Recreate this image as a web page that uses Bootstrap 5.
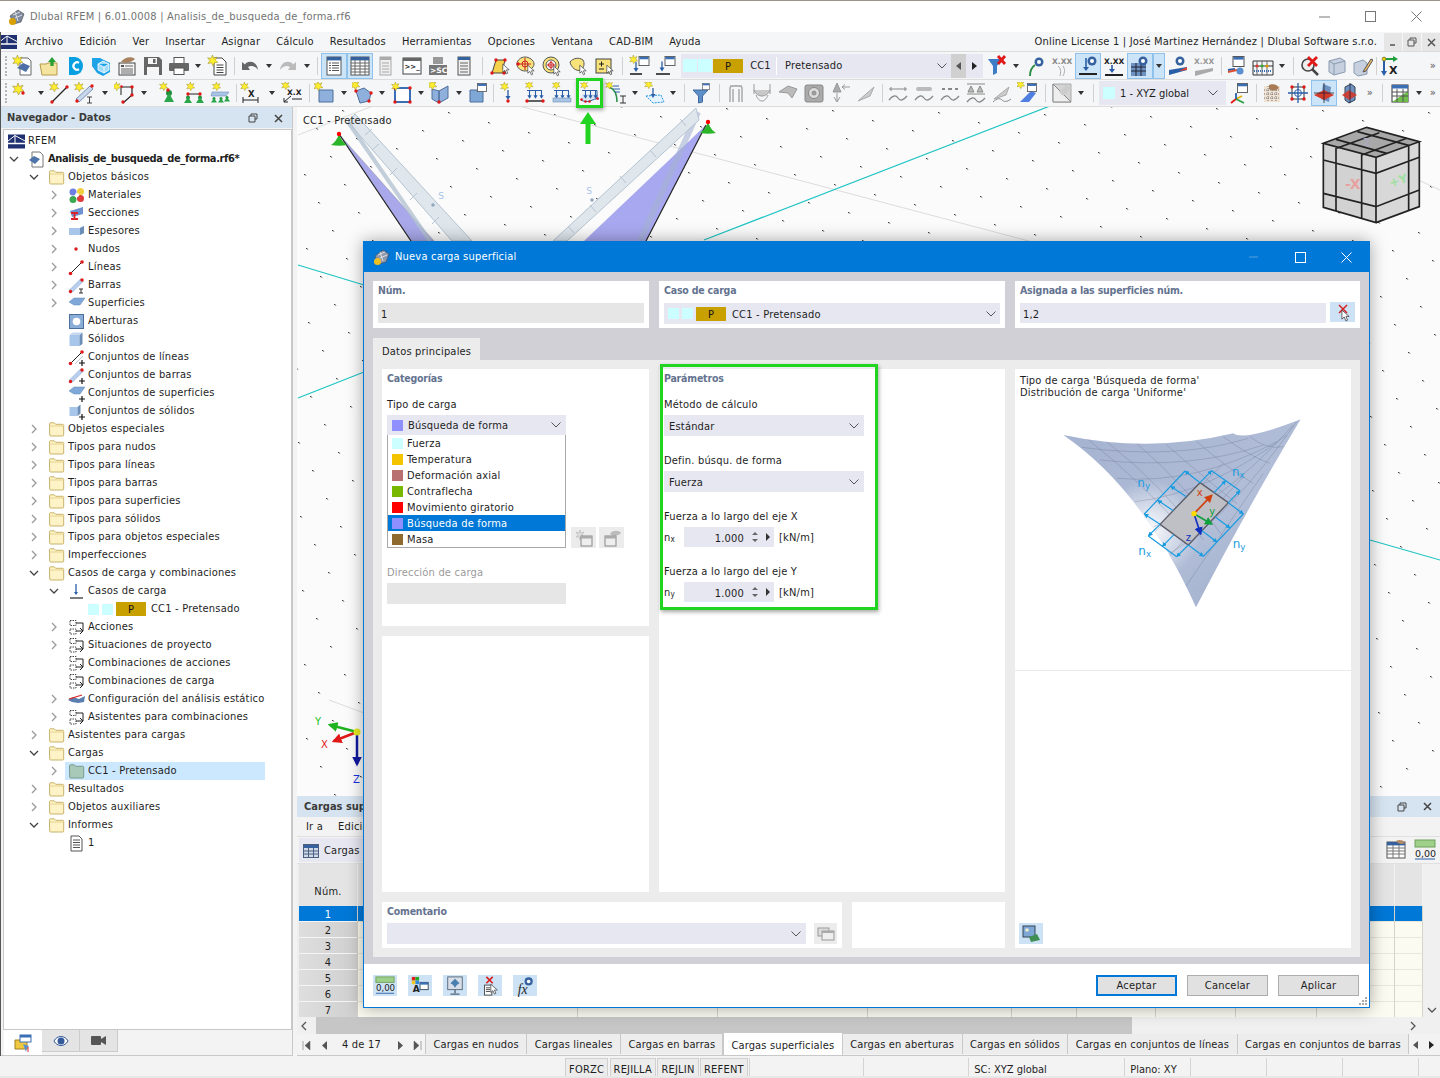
<!DOCTYPE html>
<html lang="es">
<head>
<meta charset="utf-8">
<title>Dlubal RFEM</title>
<link href="https://cdn.jsdelivr.net/npm/bootstrap@5.3.0/dist/css/bootstrap.min.css" rel="stylesheet">
<style>
html,body{margin:0;height:100%;overflow:hidden}
body{font-family:"DejaVu Sans Condensed","DejaVu Sans",sans-serif;font-size:11px;line-height:14px;color:#1e1e1e;background:#f0f0f0;letter-spacing:.2px}
svg{display:block;overflow:visible;letter-spacing:0}
.fx0{flex:none}
.app{position:relative;width:1440px;height:1078px;overflow:hidden;background:#f3f3f3}
.app::before{content:"";position:absolute;left:0;top:32px;bottom:22px;width:1px;background:#555;z-index:2}
.titlebar{height:32px;background:#fff;border-top:1px solid #9a9488;color:#737373;font-size:11px;padding-left:8px;flex:none}
.winbtn{width:46px;height:30px}
.menubar{height:20px;background:#f5f6f7;border-bottom:1px solid #dcdcdc;font-size:11px;flex:none;padding-top:1px}
.menu-items{gap:16px;padding-left:8px}
.lic{margin-left:auto;margin-right:6px}
.mdi{width:18px;height:18px;background:#e6e6e6;margin-left:1px}
.tbar{height:27px;background:#f5f6f7;border-bottom:1px solid #dcdcdc;padding-left:5px;flex:none}
.tbar1{height:28px}
.tb{width:26px;height:26px;flex:none;display:flex;align-items:center;justify-content:center}
.tb24{width:24px}
.tb svg{width:22px;height:22px}
.tb.on{background:#cce4f7;box-shadow:inset 0 0 0 1px #8fc1ea}
.ca{width:12px;height:26px;flex:none;display:flex;align-items:center;justify-content:center}
.ca::after{content:"";border:3px solid transparent;border-top:4px solid #333;border-bottom:0}
.ca15{width:15px}
.ca.on{background:#cce4f7;box-shadow:inset 0 0 0 1px #8fc1ea}
.g1{width:1px}.g2{width:2px}.g3{width:3px}.g4{width:4px}.g5{width:5px}.g6{width:6px}.g7{width:7px}.g8{width:8px}.g9{width:9px}.g10{width:10px}.g12{width:12px}
.gp{height:22px;flex:none;position:relative}
.gp.ln::after{content:"";position:absolute;left:50%;top:2px;bottom:2px;border-left:1px solid #d0d0d0}
.grip{width:3px;height:20px;flex:none;border-left:2px dotted #b4b4b4}
.more{width:14px;font-size:11px;color:#555;text-align:center;flex:none}
.combo{background:#e6e7f1;height:24px;flex:none;display:flex;align-items:center;font-size:11px}
.combo1{width:270px;padding-left:2px}
.combo2{width:127px;padding-left:4px;letter-spacing:0}
.xyz{margin-left:5px;padding-top:1px}
.sw{width:11px;height:11px;background:#ccffff;flex:none;display:block}
.sw14{width:14px;height:13px;background:#ccffff;flex:none;display:block;margin-right:1px}
.sw12{width:12px;height:12px;background:#ccffff;flex:none;display:block}
.s-bf{background:#8f8fff}.s-t{background:#f5c400}.s-d{background:#b87070}.s-c{background:#78b800}.s-m{background:#f00}.s-ma{background:#8f6a2f}
.gold{background:#c8a000;width:30px;height:14px;text-align:center;line-height:15px;flex:none;color:#111}
.cc1cell{width:34px;text-align:center;border-right:1px solid #fff;margin-right:8px;line-height:18px;padding-left:2px}
.chev{width:10px;height:6px;flex:none}
.arrowbtn{width:15px;height:24px;background:#d0d0d0;display:flex;align-items:center;justify-content:center;flex:none}
.arrowbtn2{width:17px;height:24px;background:#e6e7f1;display:flex;align-items:center;justify-content:center;flex:none}
.tri-l{border:4px solid transparent;border-right:5px solid #555;border-left:0}
.tri-r{border:4px solid transparent;border-left:5px solid #222;border-right:0}
.main{height:949px;flex:none}
.navpane{width:293px;flex:none;border-right:1px solid #c8c8c8;border-bottom:1px solid #c8c8c8}
.dockhead{background:#d6e4f1;height:21px;font-weight:700;font-size:11px;letter-spacing:0;color:#3b3b3b;padding:1px 5px 0 7px;flex:none}
.tree{flex:1;background:#fff;border:1px solid #c8c8c8;margin:1px 0 0 3px;overflow:hidden;padding-top:2px}
.trow{height:18px;display:flex;align-items:center;white-space:nowrap}
.trow b{letter-spacing:-.35px}
.lv0{padding-left:5px}.lv1{padding-left:25px}.lv2{padding-left:45px}.lv3{padding-left:84px;gap:3px}
.lv3 .lbl3{margin-left:2px}
.chv{width:10px;height:10px;flex:none;margin-right:9px}
.chv svg{width:10px;height:10px}
.nochv{width:10px;flex:none;margin-right:9px}
.ic{width:17px;height:17px;flex:none;margin-right:3px}
.ic svg{width:17px;height:17px}
.rowsel{background:#cce8ff;width:200px;padding-left:3px;height:18px;display:flex;align-items:center;margin-left:-3px}
.navtabs{height:25px;flex:none;background:#f3f3f3;padding-left:4px}
.navtab{width:38px;height:22px;background:#e4e4e4;border-right:1px solid #ccc;border-bottom:1px solid #ccc;flex:none}
.navtab.act{background:#fff;height:25px;border:0}
.rightpane{flex:1;min-width:0;margin-left:4px}
.viewport{height:689px;background:#fbfbfb;position:relative;overflow:hidden;flex:none}
.vplabel{position:absolute;left:6px;top:6px;font-size:11px;line-height:16px}
.canvas{position:absolute;left:0;top:0;width:1143px;height:689px}
.paneltop{height:21px;background:#d6e4f1;font-weight:700;font-size:11px;letter-spacing:0;color:#3b3b3b;padding-left:7px;flex:none}
.pmenu{height:20px;gap:15px;padding:1px 0 0 9px;flex:none;font-size:11px;border-bottom:1px solid #e0e0e0}
.ptool{height:27px;padding-left:2px;flex:none;border-bottom:1px solid #e0e0e0}
.ptoolsel{background:#e6e7f1;height:24px;padding:1px 30px 0 4px;gap:5px}
.ptright{gap:3px;padding-right:2px}
.grid{border-collapse:separate;border-spacing:0;table-layout:fixed;width:1124px;margin:0}
.grid col:nth-child(1){width:59px}.grid col:nth-child(2){width:220px}.grid col:nth-child(3){width:140px}.grid col:nth-child(4){width:150px}.grid col:nth-child(5){width:144px}.grid col:nth-child(6){width:65px}.grid col:nth-child(7){width:79px}.grid col:nth-child(8){width:80px}.grid col:nth-child(9){width:81px}.grid col:nth-child(10){width:78px}.grid col:nth-child(11){width:28px}
.grid th{height:42px;background:#e4e4e4;font-weight:400;text-align:center;border-right:1px solid #f2f2f2;padding:14px 0 0;vertical-align:middle;font-size:11px}
.grid td{height:16px;padding:0;background:#fbfbf1;border-right:1px solid #d4d4c8;box-shadow:inset 0 -1px #e8e8dc;overflow:hidden}
.grid td.rn{background:linear-gradient(90deg,#dedede,#cfcfcf);text-align:center;box-shadow:inset 0 -1px #f5f5f5;line-height:15px;padding-top:1px}
.grid tr.rsel td,.grid tr.rsel td.rn{background:#0078d7;color:#fff}
.gridwrap{height:153px;overflow:hidden;background:#eee;position:relative;flex:none;padding-left:2px}
.vs{position:absolute;right:0;top:0;bottom:0;width:17px;background:#f0f0f0}
.hs{height:17px;background:#f0f0f0;flex:none}
.hsthumb{width:816px;height:17px;background:#c6c6c6;margin-left:9px;flex:none}
.tabstrip{height:22px;flex:none;background:#f3f3f3;border-bottom:1px solid #c8c8c8}
.pager{width:128px;padding-left:5px;flex:none;white-space:nowrap;padding-top:1px}
.ml10{margin-left:10px}.ml11{margin-left:11px}.ml15{margin-left:15px}.ml17{margin-left:17px}.ml5{margin-left:5px}.ml3{margin-left:3px}.ml4{margin-left:4px}
.mtab{padding:0 7.5px;height:20px;line-height:21px;background:#ededed;border-left:1px solid #c8c8c8;flex:none;white-space:nowrap;letter-spacing:.15px}
.mtab.act{background:#fff;height:22px;margin-top:-1px;box-shadow:0 0 0 1px #c8c8c8;position:relative;line-height:26px;padding:0 7.5px}
.mtabend{border-right:1px solid #c8c8c8}
.tabarrows{gap:11px;padding-right:6px;margin-left:auto}
.statusbar{height:20px;background:#f3f3f3;border-bottom:2px solid #e8e8e8;margin-top:2px;flex:none}
.stgap{width:565px;flex:none}
.stcell{border-left:1px solid #d4d4d4;height:18px;line-height:23px;padding-left:5px;flex:none;letter-spacing:0}
.sb1{width:114px}.sb2{width:105px}.sb3{width:156px}.sb4{width:66px}.sb5{width:76px}
.stbtn{background:#ececec;border:1px solid #d0d0d0;border-bottom:0;height:18px;line-height:21px;padding:0 3px;flex:none;margin-right:1.500px}
.dlg{position:absolute;left:363px;top:241px;width:1007px;height:767px;background:#fff;border:1px solid #0078d7;box-shadow:0 0 16px rgba(0,0,0,.35);z-index:5}
.dlghead{height:30px;background:#0078d7;color:#fff;font-size:11px;padding-left:9px;flex:none}
.dlgtitle{margin-left:4px}
.dlgbody{background:#d0d0d6;height:692px;padding:9px 9px 7px;flex:none}
.topcards{gap:10px;height:47px}
.tc1{width:276px}.tc2{width:346px}.tc3{width:345px}
.boxw{background:#fff;border:0;border-radius:0}
.pad5{padding:3px 5px}
.hd{font-weight:700;font-size:10.5px;letter-spacing:-.2px;color:#64738f;line-height:14px;height:14px;margin:-1px 0 1px}
.hd2{font-weight:700;font-size:10.5px;letter-spacing:-.2px;color:#64738f;line-height:14px;padding-top:2px;box-sizing:content-box;height:14px}
.inp{background:#e6e6e6;height:20px;margin-top:5px;line-height:23px;padding-left:3px}
.inpb{background:#e6e7f1}
.sel{background:#e6e7f1;height:21px;padding:0 5px;position:relative;display:flex;align-items:center;justify-content:space-between}
.sel20{height:20px}
.selt{padding-top:2px}
.swgap{gap:3px}
.cclbl{margin-left:3px;padding-top:2px}
.bfl{margin-left:1px;padding-top:2px}
.dtabs{margin-top:10px;border:0}
.dtab{width:107px;height:22px;background:#ececec;line-height:27px;padding-left:9px}
.dpanel{background:#ececec;height:597px;padding:9px;gap:10px;margin-top:0}
.leftblk{width:623px;gap:10px}
.uprow{height:523px;gap:10px}
.col1{width:267px;gap:10px}
.cat{height:257px}
.emp{height:256px}
.col2{width:346px}
.ph{padding:0 5px}
.lowrow{height:47px;gap:10px}
.cm1{width:460px}.cm2{width:153px}
.rgt{width:336px;position:relative}
.rtext{padding:6px 5px 0;line-height:12px}
.illus{margin-top:6px}
.rline{border-top:1px solid #eaeaea;position:absolute;left:0;right:0;top:301px}
.lb{line-height:16px;height:14px}
.m12{margin-top:12px}.m17{margin-top:17px}.m4{margin-top:4px}
.w179{width:179px}.w200{width:200px}
.dd{width:179px;border:1px solid #a8a8a8;border-top:0;border-radius:0;margin-top:0;height:113px;background:#fff}
.dd .list-group-item{height:16px;border:0;padding:0 0 0 4px;display:flex;align-items:center;gap:4px;font-size:11px;background:transparent;color:#1e1e1e;line-height:17px;border-radius:0;margin-top:0}
.dd .list-group-item.active{background:#0078d7;color:#fff;margin-top:0}
.sbtn{width:25px;height:21px;background:#ececec;flex:none;display:flex;align-items:center;justify-content:center}
.sbtn svg{width:20px;height:18px}
.disabledlb{color:#9a9a9a}
.inpd{background:#e6e6e6;height:21px;width:179px;margin-top:4px}
.spin{width:90px;height:20px;background:#e6e7f1;flex:none;position:relative;display:flex;align-items:center;padding:3px 30px 0 0;justify-content:flex-end}
.spinctl{position:absolute;right:0;top:0;width:26px;height:20px}
.nlab{width:20px;flex:none;padding-top:2px}
.nlab sub{font-size:8px;bottom:-.1em;line-height:0}
.unit{margin-left:5px;padding-top:1px}
.dlgfoot{height:43px;flex:none;padding:0 10px 0 9px;position:relative;background:#fff}
.fbtn{width:24px;height:21px;background:#cde3f5;display:flex;align-items:center;justify-content:center;flex:none}
.fbtn svg{width:20px;height:20px}
.fbtn25{width:25px;height:20px;margin-top:1px}
.cmtbtn{width:23px;height:21px;background:#ececec;margin-top:4px;display:flex;align-items:center;justify-content:center;flex:none}
.cmtbtn svg{width:18px;height:14px}
.fbtns{gap:11px}
.btnrow{gap:10px}
.okb{width:81px;height:21px;padding:0;font-size:11px;letter-spacing:.2px;line-height:18px;background:#e1e1e1;border:1px solid #adadad;border-radius:0;color:#1e1e1e}
.okb:hover{background:#e1e1e1;color:#1e1e1e;border-color:#adadad}
.okb.prim{border:2px solid #0078d7}
.okb.prim:hover{border-color:#0078d7}
.rgrip{position:absolute;right:2px;bottom:2px;width:8px;height:8px}
.hilite{position:absolute;border:3px solid #22d422;box-shadow:1px 2px 4px rgba(0,0,0,.35);z-index:8;pointer-events:none}
.h1{left:576px;top:78px;width:27px;height:30px}
.h2{left:660px;top:364px;width:218px;height:246px}
.harrow{position:absolute;left:577px;top:110px;width:22px;height:38px;z-index:8}
</style>
</head>
<body>
<svg width="0" height="0" class="position-absolute">
<defs>
<marker id="ah" markerWidth="4" markerHeight="4" refX="3.500" refY="2" orient="auto"><path d="M0 0L4 2 0 4z" fill="#1a9ce0"/></marker>
<marker id="ahr" markerWidth="5" markerHeight="5" refX="4" refY="2.5" orient="auto"><path d="M0 0L5 2.5 0 5z" fill="#d0400f"/></marker>
<marker id="ahg" markerWidth="5" markerHeight="5" refX="4" refY="2.5" orient="auto"><path d="M0 0L5 2.5 0 5z" fill="#10a040"/></marker>
<marker id="ahb" markerWidth="5" markerHeight="5" refX="4" refY="2.5" orient="auto"><path d="M0 0L5 2.5 0 5z" fill="#1030c0"/></marker>
<marker id="ahrv" markerWidth="4" markerHeight="4" refX="3" refY="2" orient="auto"><path d="M0 0L4 2 0 4z" fill="#e01818"/></marker>
<marker id="ahgv" markerWidth="4" markerHeight="4" refX="3" refY="2" orient="auto"><path d="M0 0L4 2 0 4z" fill="#1fb41f"/></marker>
<marker id="ahbv" markerWidth="4" markerHeight="4" refX="3" refY="2" orient="auto"><path d="M0 0L4 2 0 4z" fill="#1018a0"/></marker>
<linearGradient id="surf" x1="0" y1="0" x2="1" y2="1"><stop offset="0" stop-color="#a4b2d0"/><stop offset=".6" stop-color="#b2bed8"/><stop offset="1" stop-color="#98a9c8"/></linearGradient>
<radialGradient id="shine" gradientUnits="userSpaceOnUse" cx="420" cy="480" r="150"><stop offset="0" stop-color="#fff" stop-opacity=".95"/><stop offset="1" stop-color="#fff" stop-opacity="0"/></radialGradient>
<clipPath id="surfclip"><path d="M160 195Q420 250 670 190Q700 215 872 148Q720 400 558 712Q400 360 160 195z"/></clipPath>
<pattern id="dots" width="40" height="40" patternUnits="userSpaceOnUse" patternTransform="matrix(1 .25 .35 .7 8 2)"><rect width="1.400" height="1.800" fill="#111"/></pattern>
</defs>

<symbol id="st" viewBox="0 0 22 22"><path d="M6 0l1.300 3.600L11 2.200 9.200 5.600 12 8.200l-3.800.3L6.600 12 5 8.600 1 9.400l2.200-3.200L.6 3 4.600 3.800z" fill="#ffee30" stroke="#8a7a10" stroke-width=".5"/></symbol>
<symbol id="rd" viewBox="0 0 4 4"><circle cx="2" cy="2" r="1.7" fill="#e01818"/></symbol>
<symbol id="w" viewBox="0 0 12 11"><rect x=".5" y=".5" width="11" height="10" fill="#fff" stroke="#555"/><rect x="1" y="1" width="10" height="2.6" fill="#3a6fb5"/></symbol>
<symbol id="cur" viewBox="0 0 10 14"><path d="M1 1v10l2.6-2.3L5.4 13l1.8-.8L5.500 8H9z" fill="#fff" stroke="#333" stroke-width=".8"/></symbol>
<symbol id="ar" viewBox="0 0 6 10"><path d="M3 0v7" stroke="#2a5fa8" stroke-width="1.300"/><path d="M.5 6L3 10l2.500-4z" fill="#2a5fa8"/></symbol>
<symbol id="sup" viewBox="0 0 8 8"><circle cx="4" cy="2.500" r="2" fill="#1f8f3c"/><path d="M4 2L8 8H0z" fill="#2aa64a"/></symbol>

<symbol id="a1" viewBox="0 0 22 22"><path d="M8 3h8l3 3v14H8z" fill="#fff" stroke="#666"/><path d="M5 13l6-5 7 3-4 6-4-2z" fill="#4d6fa5"/><use href="#st" width="20" height="20"/></symbol>
<symbol id="a2" viewBox="0 0 22 22"><path d="M2 9h6l2-1h9v12H4z" fill="#f5e4a0" stroke="#b79a4a"/><path d="M14 2l4 5h-2.400v4h-3.200V7H10z" fill="#27a035"/></symbol>
<symbol id="a3" viewBox="0 0 22 22"><path d="M5 2h6a8 9 0 010 18H5z" fill="#08a0e0"/><path d="M15 7.800a3.700 3.700 0 100 6.400" fill="none" stroke="#fff" stroke-width="2.200"/></symbol>
<symbol id="a4" viewBox="0 0 22 22"><path d="M2 3h8l10 5v9l-7 4-6-3-5-7z" fill="#1ea3e8"/><path d="M8 9l5-3 6 3v6l-5 3-6-3zM8 9l6 3 5-3M14 12v6" fill="#a0dcf8" stroke="#fff" stroke-width=".8"/></symbol>
<symbol id="a5" viewBox="0 0 22 22"><rect x="3" y="8" width="16" height="12" fill="#f5f5f5" stroke="#444"/><rect x="5" y="10" width="3" height="2" fill="#555"/><path d="M5 14h12M5 16h12M5 18h12M9 11h8" stroke="#666"/><path d="M5 7c3-5 11-6 14-3-3 3-9 5-14 3z" fill="#a9835f"/></symbol>
<symbol id="a6" viewBox="0 0 22 22"><path d="M2 2h15l3 3v15H2z" fill="#666"/><rect x="6" y="3" width="9" height="6" fill="#f5f5f5"/><rect x="5" y="12" width="12" height="8" fill="#f5f5f5"/><rect x="11" y="4" width="2.500" height="4" fill="#666"/></symbol>
<symbol id="a7" viewBox="0 0 22 22"><rect x="6" y="2.500" width="10" height="6" fill="#fff" stroke="#555"/><rect x="1" y="8" width="20" height="8" rx="1" fill="#666"/><rect x="6" y="13" width="10" height="6.500" fill="#fff" stroke="#555"/></symbol>
<symbol id="a8" viewBox="0 0 22 22"><path d="M7 3h8l4 4v13H7z" fill="#fff" stroke="#444"/><path d="M9.500 10h7M9.500 12.500h7M9.500 15h7M9.500 17.500h7" stroke="#444"/><use href="#st" width="20" height="20"/></symbol>
<symbol id="a9" viewBox="0 0 22 22"><path d="M7 8c6-3 11 0 12 7-3-4-7-5-10-3l2 3H3V7l3 2.600" fill="#666"/></symbol>
<symbol id="a10" viewBox="0 0 22 22"><path d="M15 8C9 5 4 8 3 15c3-4 7-5 10-3l-2 3h8V7l-3 2.600" fill="#bbb"/></symbol>
<symbol id="a11" viewBox="0 0 22 22"><rect x="4" y="2" width="14" height="18" fill="#fff" stroke="#555"/><rect x="4" y="2" width="14" height="3.400" fill="#35629f"/><path d="M6 8h2M6 10.500h2M6 13h2M6 15.500h2M9 8h7M9 10.500h7M9 13h7M9 15.500h7" stroke="#555"/></symbol>
<symbol id="a12" viewBox="0 0 22 22"><rect x="2" y="2" width="18" height="18" fill="#fff" stroke="#555"/><rect x="2" y="2" width="18" height="3.400" fill="#35629f"/><path d="M2 8h18M2 11h18M2 14h18M2 17h18M6 5v15M11 5v15M16 5v15" stroke="#666"/></symbol>
<symbol id="a13" viewBox="0 0 22 22"><rect x="5" y="2" width="11" height="18" fill="#eee" stroke="#aaa"/><rect x="5" y="2" width="11" height="3" fill="#aaa"/><path d="M7 8h7M7 11h7M7 14h7M7 17h7" stroke="#aaa"/></symbol>
<symbol id="a14" viewBox="0 0 22 22"><rect x="2" y="3" width="18" height="16" fill="#fff" stroke="#444"/><rect x="2" y="3" width="18" height="3" fill="#666"/><text x="3.500" y="14" font-size="7" font-weight="700" fill="#222" font-family="DejaVu Sans">&gt;&gt;_</text></symbol>
<symbol id="a15" viewBox="0 0 22 22"><path d="M6 2h10v7H6z" fill="#999"/><rect x="2" y="10" width="18" height="10" fill="#777"/><text x="3" y="18" font-size="7.500" font-weight="700" fill="#fff" font-family="DejaVu Sans">&gt;SC</text></symbol>
<symbol id="a16" viewBox="0 0 22 22"><rect x="5" y="2" width="12" height="18" fill="#eee" stroke="#555"/><rect x="5" y="2" width="12" height="3" fill="#35629f"/><path d="M7 8h8M7 11h8M7 14h8M7 17h8" stroke="#666"/></symbol>
<symbol id="b1" viewBox="0 0 22 22"><path d="M7 5h9l-2 8 3 5H3z" fill="#f6d24a" stroke="#444"/><use href="#rd" x="5" y="3" width="4" height="4"/><use href="#rd" x="14" y="3" width="4" height="4"/><use href="#rd" x="1" y="16" width="4" height="4"/><use href="#rd" x="13" y="16" width="4" height="4"/><use href="#cur" x="13" y="8" width="8" height="12"/></symbol>
<symbol id="b2" viewBox="0 0 22 22"><path d="M2 9c0-4 4-7 8-7s9 3 9 7-5 7-9 7-8-3-8-7z" fill="#f8e37a" stroke="#555"/><circle cx="10" cy="9" r="3" fill="none" stroke="#c22"/><path d="M10 3v12M4 9h12" stroke="#c22"/><use href="#rd" x="1" y="7" width="4" height="4"/><use href="#cur" x="12" y="9" width="8" height="12"/></symbol>
<symbol id="b3" viewBox="0 0 22 22"><circle cx="10" cy="10" r="8" fill="#f8e37a" stroke="#555"/><circle cx="10" cy="10" r="5" fill="#fff" stroke="#555"/><circle cx="10" cy="10" r="2.500" fill="none" stroke="#c22"/><path d="M10 6v8M6 10h8" stroke="#c22"/><use href="#cur" x="12" y="10" width="8" height="12"/></symbol>
<symbol id="b4" viewBox="0 0 22 22"><path d="M3 7c3-4 9-5 13-2 2 3 1 8-2 10-5 2-10-3-11-8z" fill="#f8e37a" stroke="#555"/><use href="#cur" x="12" y="9" width="8" height="12"/></symbol>
<symbol id="b5" viewBox="0 0 22 22"><rect x="3" y="4" width="15" height="14" fill="#f8e27a" stroke="#444"/><path d="M6 9h5M8.500 6.500v5M6 14h5" stroke="#222"/><use href="#cur" x="13" y="9" width="8" height="12"/></symbol>
<symbol id="b6" viewBox="0 0 22 22"><use href="#w" x="9" y="1" width="12" height="10"/><use href="#ar" x="4" y="7" width="6" height="10"/><path d="M1 19h12" stroke="#222" stroke-width="1.600"/><use href="#st" width="16" height="16"/></symbol>
<symbol id="b7" viewBox="0 0 22 22"><use href="#w" x="9" y="1" width="12" height="10"/><use href="#ar" x="4" y="6" width="6" height="11"/><path d="M1 19h14" stroke="#222" stroke-width="1.600"/></symbol>

<symbol id="c1" viewBox="0 0 22 22"><use href="#st" x="3" y="1" width="22" height="22"/><use href="#rd" x="12" y="9" width="4" height="4"/></symbol>
<symbol id="c2" viewBox="0 0 22 22"><path d="M4 20L19 5" stroke="#222" stroke-width="1.300"/><use href="#rd" x="2" y="18" width="4" height="4"/><use href="#rd" x="17" y="3" width="4" height="4"/><use href="#st" x="1" width="18" height="18"/></symbol>
<symbol id="c3" viewBox="0 0 22 22"><path d="M3 17L17 4l3 3L6 20z" fill="#c7d8ee" stroke="#7d93b3"/><use href="#rd" x="2" y="17" width="4" height="4"/><use href="#rd" x="17" y="2" width="4" height="4"/><path d="M14 15h5M16.500 15v6M14 21h5" stroke="#444" fill="none"/><use href="#st" x="1" width="18" height="18"/></symbol>
<symbol id="c4" viewBox="0 0 22 22"><path d="M7 5h11v8L9 21" fill="none" stroke="#222" stroke-width="1.200"/><path d="M7 5v8" stroke="#222"/><use href="#rd" x="16" y="3" width="4" height="4"/><use href="#rd" x="16" y="11" width="4" height="4"/><use href="#rd" x="7" y="18" width="4" height="4"/><use href="#rd" x="6" y="3" width="3" height="3"/><use href="#st" x="-2" width="16" height="16"/></symbol>
<symbol id="c5" viewBox="0 0 22 22"><circle cx="12" cy="11" r="3" fill="#1f8f3c"/><path d="M12 11l5 9H7z" fill="#2aa64a"/><use href="#rd" x="9" y="6" width="4" height="4"/><use href="#st" x="2" width="16" height="16"/></symbol>
<symbol id="c6" viewBox="0 0 22 22"><path d="M5 12h12" stroke="#222"/><use href="#sup" x="1" y="13" width="8" height="8"/><use href="#sup" x="13" y="13" width="8" height="8"/><use href="#rd" x="3" y="10" width="4" height="4"/><use href="#rd" x="15" y="10" width="4" height="4"/><use href="#st" x="3" width="16" height="16"/></symbol>
<symbol id="c7" viewBox="0 0 22 22"><path d="M3 10h17l-3 4H2z" fill="#a9c4e4" stroke="#6f8fb8" stroke-width=".6"/><use href="#sup" x="2" y="14" width="6" height="7"/><use href="#sup" x="9" y="14" width="6" height="7"/><use href="#sup" x="15" y="13" width="6" height="7"/><use href="#st" x="3" width="16" height="16"/></symbol>
<symbol id="c8" viewBox="0 0 22 22"><text x="8" y="15" font-size="8.500" font-weight="700" fill="#222" font-family="DejaVu Sans">X</text><path d="M3 18h15M3 15v6M18 15v6" stroke="#222"/><use href="#st" width="16" height="16"/></symbol>
<symbol id="c9" viewBox="0 0 22 22"><text x="6" y="13" font-size="7.500" font-weight="700" fill="#222" font-family="DejaVu Sans">X.X</text><path d="M3 20l7-6M3 20v-4M3 20h4M11 17h10" stroke="#222"/><use href="#st" x="0" y="-1" width="16" height="16"/></symbol>
<symbol id="c10" viewBox="0 0 22 22"><path d="M5 8h14v12H5z" fill="#8fb0dc" stroke="#4d6f9c"/><use href="#st" x="-1" y="-1" width="18" height="18"/></symbol>
<symbol id="c11" viewBox="0 0 22 22"><path d="M4 9l8-3 7 5-2 8-9 2z" fill="#8fb0dc" stroke="#4d6f9c"/><use href="#rd" x="2" y="7" width="4" height="4"/><use href="#rd" x="15" y="17" width="4" height="4"/><use href="#rd" x="17" y="9" width="4" height="4"/><use href="#st" x="-2" y="-2" width="18" height="18"/></symbol>
<symbol id="c12" viewBox="0 0 22 22"><rect x="4" y="6" width="15" height="14" fill="#fff" stroke="#3a6fb5" stroke-width="2"/><use href="#rd" x="2" y="4" width="4" height="4"/><use href="#rd" x="17" y="4" width="4" height="4"/><use href="#rd" x="2" y="18" width="4" height="4"/><use href="#rd" x="17" y="18" width="4" height="4"/><use href="#st" width="16" height="16"/></symbol>
<symbol id="c13" viewBox="0 0 22 22"><path d="M10 9l9-5v12l-9 5zM10 9L3 7v10l7 4z" fill="#8fb0dc" stroke="#4d6f9c"/><use href="#rd" x="8" y="18" width="4" height="4"/><use href="#st" x="-2" y="-2" width="18" height="18"/></symbol>
<symbol id="c14" viewBox="0 0 22 22"><path d="M3 8h13v12H3z" fill="#7fa7d6" stroke="#4d6f9c"/><use href="#w" x="9" y="1" width="12" height="9"/></symbol>
<symbol id="c15" viewBox="0 0 22 22"><use href="#ar" x="8" y="8" width="6" height="10"/><use href="#rd" x="9" y="17" width="4" height="4"/><use href="#st" x="3" y="0" width="16" height="16"/></symbol>
<symbol id="c16" viewBox="0 0 22 22"><use href="#ar" x="3" y="8" width="5" height="9"/><use href="#ar" x="9" y="8" width="5" height="9"/><use href="#ar" x="15" y="8" width="5" height="9"/><path d="M3 8.500h15" stroke="#2a5fa8"/><path d="M3 19h16" stroke="#222" stroke-width="1.400"/><use href="#rd" x="1" y="17" width="4" height="4"/><use href="#rd" x="17" y="17" width="4" height="4"/><use href="#st" x="1" y="-1" width="15" height="15"/></symbol>
<symbol id="c17" viewBox="0 0 22 22"><use href="#ar" x="3" y="8" width="5" height="9"/><use href="#ar" x="9" y="8" width="5" height="9"/><use href="#ar" x="15" y="8" width="5" height="9"/><path d="M3 8.500h15" stroke="#2a5fa8"/><rect x="2" y="16" width="18" height="4" fill="#a9c4e4" stroke="#6f8fb8" stroke-width=".6"/><use href="#st" x="1" y="-1" width="15" height="15"/></symbol>
<symbol id="c18" viewBox="0 0 22 22"><path d="M2 18c4 2 6 2 9 1s6-3 9-2l-1-5H3z" fill="#c9dcf2" opacity=".6"/><use href="#ar" x="4" y="8" width="5" height="9"/><use href="#ar" x="9" y="8" width="5" height="9"/><use href="#ar" x="14" y="8" width="5" height="9"/><path d="M3 8.500h15v8" stroke="#2a5fa8" fill="none"/><path d="M2 18c4 2 6 2 9 1s6-3 9-2" fill="none" stroke="#2a5fa8"/><use href="#rd" x="1" y="16" width="3" height="3"/><use href="#rd" x="9" y="18" width="3" height="3"/><use href="#rd" x="17" y="15" width="3" height="3"/><use href="#rd" x="5" y="18" width="3" height="3"/><use href="#st" x="1" y="-1" width="15" height="15"/></symbol>
<symbol id="c19" viewBox="0 0 22 22"><path d="M4 5c6 2 8 8 8 15" fill="none" stroke="#2a8f45" stroke-width="1.600"/><path d="M8 4h6M8 7h7M10 10h5" stroke="#2a5fa8"/><path d="M15 14h6M18 14v7M15 21h6" stroke="#333" fill="none"/><use href="#st" x="0" y="-1" width="15" height="15"/></symbol>
<symbol id="c20" viewBox="0 0 22 22"><path d="M3 14l15-1 3 7-11 1z" fill="#e6f4ff" stroke="#2a9ae0" stroke-dasharray="2 1"/><use href="#ar" x="7" y="6" width="6" height="10"/><use href="#st" x="1" y="-2" width="16" height="16"/></symbol>
<symbol id="c21" viewBox="0 0 22 22"><path d="M2 8h15l-5.500 6v6l-4 1v-7z" fill="#5f8fc8" stroke="#3f6a9f"/><use href="#w" x="9" y="1" width="12" height="7"/></symbol>

<symbol id="d1" viewBox="0 0 22 22"><path d="M5 20V6c0-3 12-3 12 0v14M8 20V7M14 20V7M5 4h12" fill="none" stroke="#aaa" stroke-width="1.500"/></symbol>
<symbol id="d2" viewBox="0 0 22 22"><path d="M3 2v10M19 2v10M3 8c3 8 13 8 16 0" fill="#c8c8c8" stroke="#999"/><path d="M5 13c3 8 9 8 12 0" fill="none" stroke="#999"/></symbol>
<symbol id="d3" viewBox="0 0 22 22"><path d="M2 10l9-6 9 3-5 9-4-5z" fill="#bbb" stroke="#999"/></symbol>
<symbol id="d4" viewBox="0 0 22 22"><rect x="2" y="3" width="18" height="17" rx="2" fill="#aaa" stroke="#888"/><circle cx="11" cy="11" r="5.500" fill="#ddd" stroke="#888"/><circle cx="11" cy="11" r="2.500" fill="#999"/></symbol>
<symbol id="d5" viewBox="0 0 22 22"><path d="M8 1l4 9H4zM8 11v9" fill="#aaa" stroke="#999"/><path d="M13 5h8M13 5l3-2.500M13 5l3 2.500M5 15l3 5 3-5" stroke="#999" fill="none"/></symbol>
<symbol id="d6" viewBox="0 0 22 22"><path d="M3 19L19 5l-4 9z" fill="#ccc" stroke="#aaa"/></symbol>
<symbol id="d7" viewBox="0 0 22 22"><path d="M2 7h18M4 5v4M18 5v4" stroke="#888"/><path d="M2 18c4-5 7-5 9-2s5 3 9-2" fill="none" stroke="#888" stroke-width="1.300"/></symbol>
<symbol id="d8" viewBox="0 0 22 22"><rect x="3" y="5" width="16" height="4" rx="2" fill="#bbb"/><path d="M2 18c4-5 7-5 9-2s5 3 9-2" fill="none" stroke="#888" stroke-width="1.300"/></symbol>
<symbol id="d9" viewBox="0 0 22 22"><path d="M3 7h3M9 7h4M16 7h3" stroke="#888" stroke-width="2"/><path d="M2 18c4-5 7-5 9-2s5 3 9-2" fill="none" stroke="#888" stroke-width="1.300"/></symbol>
<symbol id="d10" viewBox="0 0 22 22"><path d="M2 2h18M6 4l3 6H3zM15 4l3 6h-6zM2 12h18" stroke="#888" fill="#bbb"/><path d="M2 20c4-5 7-5 9-2s5 3 9-2" fill="none" stroke="#888" stroke-width="1.300"/></symbol>
<symbol id="d11" viewBox="0 0 22 22"><path d="M3 17L18 5l-3 8z" fill="#ccc" stroke="#aaa"/><path d="M2 20c4-4 7-4 9-2s5 2 9-1" fill="none" stroke="#888"/></symbol>
<symbol id="d12" viewBox="0 0 22 22"><path d="M3 20L14 9l5 2-7 9z" fill="#4f7fe0"/><use href="#w" x="9" y="1" width="12" height="9"/><use href="#st" x="-1" y="-2" width="16" height="16"/></symbol>
<symbol id="d13" viewBox="0 0 22 22"><path d="M2 2h18v18H2z" fill="#d4d4d4" stroke="#aaa"/><path d="M2 2l18 18M2 2v18h18" stroke="#888" fill="#eee"/><path d="M16 2l4 4-8 8-4-4z" fill="#ccc"/></symbol>
<symbol id="e1" viewBox="0 0 22 22"><path d="M2 4h14l-5 7v7l-4 2v-9z" fill="#3d7dc8"/><path d="M12 1l7 8M19 1l-7 8" stroke="#e01818" stroke-width="2.800"/></symbol>
<symbol id="e2" viewBox="0 0 22 22"><circle cx="14" cy="7" r="4.500" fill="#35629f"/><circle cx="14" cy="7" r="2" fill="#fff"/><path d="M5 21c0-6 2-9 5-11" fill="none" stroke="#2a8f45" stroke-width="2"/></symbol>
<symbol id="e3" viewBox="0 0 22 22"><text x="1" y="9" font-size="7.500" font-weight="700" fill="#888" font-family="DejaVu Sans">X.XX</text><path d="M7 11c3 2 3 6 2 10M12 11c2 3 2 6 0 10" fill="none" stroke="#aaa"/></symbol>
<symbol id="e4" viewBox="0 0 22 22"><circle cx="15" cy="6" r="4.500" fill="#35629f"/><circle cx="15" cy="6" r="2" fill="#fff"/><path d="M9 3v12" stroke="#2a5fa8" stroke-width="1.600"/><path d="M6 12l3 4 3-4z" fill="#2a5fa8"/><path d="M2 19h18" stroke="#222" stroke-width="2"/></symbol>
<symbol id="e5" viewBox="0 0 22 22"><text x="1" y="9" font-size="7.500" font-weight="700" fill="#222" font-family="DejaVu Sans">X.XX</text><path d="M9 10v6" stroke="#2a5fa8" stroke-width="1.600"/><path d="M6 14l3 4 3-4z" fill="#2a5fa8"/><path d="M2 20h18" stroke="#222" stroke-width="2"/></symbol>
<symbol id="e6" viewBox="0 0 22 22"><rect x="2" y="8" width="15" height="13" fill="#6d92c2"/><path d="M2 12h15M2 16h15M7 8v13M12 8v13" stroke="#223"/><circle cx="14" cy="6" r="4.500" fill="#35629f"/><circle cx="14" cy="6" r="2" fill="#fff"/></symbol>
<symbol id="e7" viewBox="0 0 22 22"><circle cx="13" cy="6" r="4.500" fill="#35629f"/><circle cx="13" cy="6" r="2" fill="#fff"/><path d="M2 15l18-3v3L2 20z" fill="#2a5fa8"/><path d="M20 12v3l-8 1" fill="#d43"/></symbol>
<symbol id="e8" viewBox="0 0 22 22"><text x="1" y="9" font-size="7.500" font-weight="700" fill="#999" font-family="DejaVu Sans">X.XX</text><path d="M2 16l18-3v3L2 21z" fill="#aaa"/></symbol>
<symbol id="e9" viewBox="0 0 22 22"><use href="#w" x="6" y="1" width="13" height="11"/><path d="M2 15l7-1" stroke="#2a5fa8" stroke-width="2"/><path d="M2 17l9-2" stroke="#e05030" stroke-width="2"/><circle cx="14" cy="16" r="3.500" fill="#5a8fd0"/></symbol>
<symbol id="e10" viewBox="0 0 22 22"><path d="M1 6h20v14H1z" fill="none" stroke="#333"/><path d="M5 6v14M10 6v14M15 6v14" stroke="#666"/><path d="M1 11h20" stroke="#333"/><circle cx="5" cy="11" r="1.600" fill="#d33"/><circle cx="10" cy="11" r="1.600" fill="#3a3"/><circle cx="15" cy="11" r="1.600" fill="#d90"/><path d="M2 16h17" stroke="#3a6fb5" stroke-width="2" stroke-dasharray="1 1"/></symbol>
<symbol id="e11" viewBox="0 0 22 22"><circle cx="9" cy="10" r="6" fill="#eee" stroke="#444" stroke-width="1.600"/><path d="M13 14l6 6" stroke="#444" stroke-width="2.500"/><path d="M9 2l9 9M18 2l-9 9" stroke="#e01818" stroke-width="2.800"/></symbol>
<symbol id="e12" viewBox="0 0 22 22"><path d="M4 6l11-3 5 3v11l-11 3-5-3z" fill="#c6d0de" stroke="#8a9bb2"/><path d="M4 6l5 3 11-3M9 9v11" stroke="#8a9bb2" fill="none"/></symbol>
<symbol id="e13" viewBox="0 0 22 22"><path d="M3 8l9-3 4 3v11l-9 2-4-3z" fill="#c6d0de" stroke="#8a9bb2"/><path d="M13 15L20 4l2 1-7 11-3 1z" fill="#f2b86b" stroke="#555"/></symbol>
<symbol id="e14" viewBox="0 0 22 22"><path d="M5 2v17" stroke="#2a5fa8" stroke-width="2"/><path d="M2 16l3 5 3-5z" fill="#2a5fa8"/><path d="M5 4h11" stroke="#1f9f3c" stroke-width="2"/><path d="M14 1l5 3-5 3z" fill="#1f9f3c"/><circle cx="5" cy="4" r="2" fill="#e8d000" stroke="#444" stroke-width=".5"/><text x="10" y="19" font-size="11" font-weight="700" fill="#222" font-family="DejaVu Sans">X</text></symbol>
<symbol id="f1" viewBox="0 0 22 22"><rect x="3" y="4" width="16" height="16" fill="#e8c9a0" opacity=".4"/><path d="M3 8h16M3 12h16M3 16h16M7 4v16M11 4v16M15 4v16" stroke="#777" stroke-dasharray="1 1"/><path d="M8 3c4-2 9 0 10 3-3 3-7 3-10 1z" fill="#a87a55"/></symbol>
<symbol id="f2" viewBox="0 0 22 22"><rect x="5" y="5" width="12" height="12" fill="#fff" stroke="#333"/><path d="M11 1v20M1 11h20" stroke="#2a5fa8" stroke-width="1.300"/><circle cx="11" cy="11" r="3.500" fill="none" stroke="#2a5fa8"/><use href="#rd" x="3" y="3" width="4" height="4"/><use href="#rd" x="15" y="3" width="4" height="4"/><use href="#rd" x="3" y="15" width="4" height="4"/><use href="#rd" x="15" y="15" width="4" height="4"/></symbol>
<symbol id="f3" viewBox="0 0 22 22"><path d="M10 2l8 3-2 15-8-3z" fill="#6d92c2"/><path d="M1 13l10-5 10 5-10 5z" fill="#d23a2a"/><path d="M11 1v20M1 11h20" stroke="#223" stroke-width=".8"/></symbol>
<symbol id="f4" viewBox="0 0 22 22"><path d="M6 5l6-3 4 3v13l-6 3-4-3z" fill="#6d92c2" stroke="#345"/><path d="M10 8l8 5-8 5-7-5z" fill="#d23a2a" opacity=".9"/><path d="M11 1v20" stroke="#223" stroke-width=".8"/></symbol>
<symbol id="f5" viewBox="0 0 22 22"><rect x="3" y="3" width="16" height="17" fill="#fff" stroke="#333"/><rect x="3" y="3" width="16" height="3.500" fill="#3a6fb5"/><path d="M3 20h16V9z" fill="#6fbf4a"/><path d="M3 10h16M3 14h16M8 7v13M14 7v13" stroke="#555"/></symbol>
<symbol id="f6" viewBox="0 0 22 22"><use href="#w" x="7" y="1" width="13" height="10"/><path d="M7 17l6-3" stroke="#e0b000" stroke-width="1.800"/><path d="M7 17l-5 4" stroke="#e01818" stroke-width="1.800"/><path d="M7 17l8 4" stroke="#2a9f45" stroke-width="1.800"/><path d="M7 17v-6" stroke="#2a5fa8" stroke-width="1.800"/></symbol>

<symbol id="fold" viewBox="0 0 17 17"><path d="M1.500 5V2.800c0-.6.500-1 1-1h3.700l1.500 1.500h7c.6 0 1 .5 1 1V14c0 .6-.5 1-1 1h-12c-.6 0-1-.4-1-1z" fill="#fdf3c6" stroke="#c8b26a"/><path d="M1.500 5h14" stroke="#e4d28c"/></symbol>
<symbol id="foldg" viewBox="0 0 17 17"><path d="M1.500 5V2.800c0-.6.500-1 1-1h3.700l1.500 1.500h7c.6 0 1 .5 1 1V14c0 .6-.5 1-1 1h-12c-.6 0-1-.4-1-1z" fill="#a8c8b8" stroke="#789c8c"/></symbol>
<symbol id="rf" viewBox="0 0 17 14"><rect width="17" height="14" fill="#1f2f6f"/><path d="M0 9h17" stroke="#fff" stroke-width="1.500"/><path d="M0 6.500L7 1l10 5.500" fill="none" stroke="#fff"/><path d="M7 1v8" stroke="#fff"/></symbol>
<symbol id="tfile" viewBox="0 0 17 17"><path d="M4 1h8l3 3v12H4z" fill="#fff" stroke="#777"/><path d="M1 9l5-4 6 3-5 5z" fill="#4d74a8"/></symbol>
<symbol id="tmat" viewBox="0 0 17 17"><circle cx="5" cy="5" r="3.500" fill="#6d7fe0"/><circle cx="12.500" cy="4.500" r="3.500" fill="#f0d040"/><circle cx="5" cy="12.500" r="3.500" fill="#39a850"/><circle cx="12.500" cy="11.500" r="3.500" fill="#e03a3a"/><circle cx="9" cy="8" r="2" fill="#fff"/></symbol>
<symbol id="tsec" viewBox="0 0 17 17"><path d="M2 6l13-4v7L4 12z" fill="#6d92cf"/><path d="M3 8h7M6.500 8v6M3 14h7" stroke="#d8242a" stroke-width="1.800" fill="none"/></symbol>
<symbol id="tthk" viewBox="0 0 17 17"><path d="M1 5h11l4-2v7l-4 2H1z" fill="#a8c6ea"/><path d="M12 5l4-2v7l-4 2z" fill="#6b8eb8"/></symbol>
<symbol id="tnod" viewBox="0 0 17 17"><circle cx="8" cy="8" r="1.700" fill="#e01818"/></symbol>
<symbol id="tlin" viewBox="0 0 17 17"><path d="M2 15L14 3" stroke="#222"/><circle cx="2.500" cy="14.500" r="1.800" fill="#e01818"/><circle cx="14" cy="3" r="1.800" fill="#e01818"/></symbol>
<symbol id="tbar" viewBox="0 0 17 17"><path d="M1.500 13L12.500 2l3 2-11 11z" fill="#b8cff0" stroke="#7d9ac2" stroke-width=".5"/><circle cx="2.500" cy="14.500" r="1.700" fill="#e01818"/><circle cx="14" cy="3" r="1.700" fill="#e01818"/><path d="M11 12h4M13 12v4M11 16h4" stroke="#333"/></symbol>
<symbol id="tsur" viewBox="0 0 17 17"><path d="M1 7l5-4h11l-5 7H6z" fill="#7fa8d8" stroke="#5f88b8" stroke-width=".5"/></symbol>
<symbol id="tabe" viewBox="0 0 17 17"><rect x="1.500" y="1.500" width="14" height="14" fill="#8aaed8" stroke="#4d6f9c"/><circle cx="8.500" cy="8.500" r="3.800" fill="#fff"/></symbol>
<symbol id="tsol" viewBox="0 0 17 17"><path d="M1.500 4h10v11h-10z" fill="#a8c6ea"/><path d="M11.500 4l3-2.500V13l-3 2z" fill="#6b8eb8"/><path d="M1.500 4l3-2.500h10l-3 2.500z" fill="#c4d8f0"/></symbol>
<symbol id="plus" viewBox="0 0 6 6"><path d="M3 0v6M0 3h6" stroke="#111" stroke-width="1.200"/></symbol>
<symbol id="tlc" viewBox="0 0 17 17"><path d="M2 15L14 3" stroke="#222"/><path d="M7 15L15 7" stroke="#bcc9dc"/><circle cx="2.500" cy="14.500" r="1.800" fill="#e01818"/><circle cx="14" cy="3" r="1.800" fill="#e01818"/><use href="#plus" x="11" y="11" width="6" height="6"/></symbol>
<symbol id="tbc" viewBox="0 0 17 17"><path d="M1.500 13L12.500 2l3 2-11 11z" fill="#b8cff0" stroke="#7d9ac2" stroke-width=".5"/><circle cx="2.500" cy="14.500" r="1.700" fill="#e01818"/><circle cx="14" cy="3" r="1.700" fill="#e01818"/><use href="#plus" x="11" y="11" width="6" height="6"/></symbol>
<symbol id="tsc" viewBox="0 0 17 17"><path d="M1 6l5-4h11l-5 7H6z" fill="#7fa8d8" stroke="#5f88b8" stroke-width=".5"/><use href="#plus" x="11" y="11" width="6" height="6"/></symbol>
<symbol id="tsoc" viewBox="0 0 17 17"><path d="M1.500 4h8v9h-8z" fill="#a8c6ea"/><path d="M9.500 4l3-2.500v9l-3 2.500z" fill="#6b8eb8"/><use href="#plus" x="11" y="11" width="6" height="6"/></symbol>
<symbol id="tload" viewBox="0 0 17 17"><path d="M8 1v10" stroke="#2a5fa8" stroke-width="1.300"/><path d="M6 9l2 3 2-3z" fill="#2a5fa8"/><path d="M2 15h13" stroke="#444" stroke-width="1.400"/></symbol>
<symbol id="tact" viewBox="0 0 17 17"><rect x="2" y="1.500" width="6" height="5" fill="none" stroke="#444" stroke-dasharray="1.500 1"/><rect x="2" y="10" width="6" height="5" fill="none" stroke="#444" stroke-dasharray="1.500 1"/><path d="M8 4h7v8H8M12 9l3 3-3 3" fill="none" stroke="#222"/></symbol>
<symbol id="tcfg" viewBox="0 0 17 17"><path d="M0 9l5-3 6 2 6-3-1 6-6 1-6-1z" fill="#5a7eb0"/><path d="M1 8l13-4" stroke="#d22" stroke-width="1.300"/></symbol>
<symbol id="tdoc" viewBox="0 0 17 17"><path d="M3 1h8l3 3v12H3z" fill="#fff" stroke="#555"/><path d="M5 5h7M5 7.500h7M5 10h7M5 12.500h7" stroke="#555"/></symbol>
<symbol id="cr" viewBox="0 0 10 10"><path d="M3 1l4 4-4 4" fill="none" stroke="#999" stroke-width="1.300"/></symbol>
<symbol id="cd" viewBox="0 0 10 10"><path d="M1 3l4 4 4-4" fill="none" stroke="#444" stroke-width="1.300"/></symbol>
</svg>

<div class="app d-flex flex-column">
  <div class="titlebar d-flex align-items-center">
    <svg width="18" height="18" viewBox="0 0 18 18" class="me-1"><path d="M2 8l8-6 6 4-3 8-7 2z" fill="#7e8aa0" stroke="#444" stroke-width=".6"/><path d="M5 7l7-3M7 10l7-3M7 4l3 9" stroke="#ddd"/><circle cx="4.500" cy="13.500" r="3.500" fill="#d8a000"/></svg>
    <span>Dlubal RFEM | 6.01.0008 | Analisis_de_busqueda_de_forma.rf6</span>
    <div class="ms-auto d-flex">
      <div class="winbtn d-flex align-items-center justify-content-center"><svg width="12" height="12" viewBox="0 0 12 12"><path d="M0 6h11" stroke="#777"/></svg></div>
      <div class="winbtn d-flex align-items-center justify-content-center"><svg width="12" height="12" viewBox="0 0 12 12"><rect x=".5" y=".5" width="10" height="10" fill="none" stroke="#777"/></svg></div>
      <div class="winbtn d-flex align-items-center justify-content-center"><svg width="12" height="12" viewBox="0 0 12 12"><path d="M.5.5l10 10M10.500.5l-10 10" stroke="#777"/></svg></div>
    </div>
  </div>

  <div class="menubar d-flex align-items-center">
    <svg width="17" height="14" class="fx0"><use href="#rf"/></svg>
    <div class="d-flex menu-items"><span>Archivo</span><span>Edición</span><span>Ver</span><span>Insertar</span><span>Asignar</span><span>Cálculo</span><span>Resultados</span><span>Herramientas</span><span>Opciones</span><span>Ventana</span><span>CAD-BIM</span><span>Ayuda</span></div>
    <span class="lic">Online License 1 | José Martinez Hernández | Dlubal Software s.r.o.</span>
    <div class="mdi d-flex align-items-center justify-content-center"><svg width="8" height="8" viewBox="0 0 8 8"><path d="M1 7h5" stroke="#555" stroke-width="1.500"/></svg></div>
    <div class="mdi d-flex align-items-center justify-content-center"><svg width="10" height="10" viewBox="0 0 10 10"><path d="M3 3V1h6v5H7M1 3h6v6H1z" fill="none" stroke="#555"/></svg></div>
    <div class="mdi d-flex align-items-center justify-content-center"><svg width="9" height="9" viewBox="0 0 9 9"><path d="M1 1l7 7M8 1L1 8" stroke="#555" stroke-width="1.500"/></svg></div>
  </div>

  <!-- toolbar 1 -->
  <div class="tbar tbar1 d-flex align-items-center">
    <span class="grip"></span><span class="gp g2"></span>
    <span class="tb"><svg><use href="#a1"/></svg></span><span class="tb"><svg><use href="#a2"/></svg></span><span class="tb"><svg><use href="#a3"/></svg></span><span class="tb"><svg><use href="#a4"/></svg></span><span class="tb"><svg><use href="#a5"/></svg></span><span class="tb"><svg><use href="#a6"/></svg></span><span class="tb"><svg><use href="#a7"/></svg></span><span class="ca"></span><span class="gp g1"></span><span class="tb"><svg><use href="#a8"/></svg></span>
    <span class="gp g6 ln"></span>
    <span class="tb"><svg><use href="#a9"/></svg></span><span class="ca"></span><span class="tb"><svg><use href="#a10"/></svg></span><span class="ca"></span>
    <span class="gp g8 ln"></span>
    <span class="tb on"><svg><use href="#a11"/></svg></span><span class="tb on"><svg><use href="#a12"/></svg></span><span class="tb"><svg><use href="#a13"/></svg></span><span class="tb"><svg><use href="#a14"/></svg></span><span class="tb"><svg><use href="#a15"/></svg></span><span class="tb"><svg><use href="#a16"/></svg></span>
    <span class="gp g10 ln"></span>
    <span class="tb"><svg><use href="#b1"/></svg></span><span class="tb"><svg><use href="#b2"/></svg></span><span class="tb"><svg><use href="#b3"/></svg></span><span class="tb"><svg><use href="#b4"/></svg></span><span class="tb"><svg><use href="#b5"/></svg></span>
    <span class="gp g10 ln"></span>
    <span class="tb"><svg><use href="#b6"/></svg></span><span class="tb"><svg><use href="#b7"/></svg></span><span class="gp g2"></span>
    <div class="combo combo1"><span class="sw14"></span><span class="sw14"></span><span class="gold">P</span><span class="cc1cell">CC1</span><span>Pretensado</span>
      <svg class="chev ms-auto me-1" viewBox="0 0 10 6"><path d="M.5.5L5 5 9.500.5" fill="none" stroke="#555"/></svg></div>
    <span class="arrowbtn"><span class="tri-l"></span></span><span class="arrowbtn2"><span class="tri-r"></span></span>
    <span class="gp g1"></span>
    <span class="tb"><svg><use href="#e1"/></svg></span><span class="ca"></span><span class="gp g1"></span><span class="tb"><svg><use href="#e2"/></svg></span><span class="tb"><svg><use href="#e3"/></svg></span><span class="tb on"><svg><use href="#e4"/></svg></span><span class="tb"><svg><use href="#e5"/></svg></span><span class="tb on"><svg><use href="#e6"/></svg></span><span class="ca on"></span><span class="tb"><svg><use href="#e7"/></svg></span><span class="tb"><svg><use href="#e8"/></svg></span>
    <span class="gp g7 ln"></span>
    <span class="tb"><svg><use href="#e9"/></svg></span><span class="tb"><svg><use href="#e10"/></svg></span><span class="ca"></span>
    <span class="gp g9 ln"></span>
    <span class="tb"><svg><use href="#e11"/></svg></span><span class="tb"><svg><use href="#e12"/></svg></span><span class="tb"><svg><use href="#e13"/></svg></span><span class="gp g2 ln"></span><span class="tb"><svg><use href="#e14"/></svg></span>
    <span class="more ms-auto">»</span>
  </div>

  <!-- toolbar 2 -->
  <div class="tbar d-flex align-items-center">
    <span class="grip"></span>
    <span class="tb tb24"><svg><use href="#c1"/></svg></span><span class="gp g3"></span><span class="ca"></span><span class="tb tb24"><svg><use href="#c2"/></svg></span><span class="tb"><svg><use href="#c3"/></svg></span><span class="ca ca15"></span><span class="tb"><svg><use href="#c4"/></svg></span><span class="ca"></span><span class="gp g5"></span>
    <span class="tb"><svg><use href="#c5"/></svg></span><span class="tb"><svg><use href="#c6"/></svg></span><span class="tb"><svg><use href="#c7"/></svg></span>
    <span class="gp g5 ln"></span>
    <span class="tb"><svg><use href="#c8"/></svg></span><span class="ca ca15"></span><span class="tb"><svg><use href="#c9"/></svg></span>
    <span class="gp g7 ln"></span>
    <span class="tb"><svg><use href="#c10"/></svg></span><span class="ca"></span><span class="tb"><svg><use href="#c11"/></svg></span><span class="ca"></span><span class="gp g1"></span><span class="tb"><svg><use href="#c12"/></svg></span><span class="ca"></span><span class="tb"><svg><use href="#c13"/></svg></span><span class="ca"></span><span class="tb"><svg><use href="#c14"/></svg></span>
    <span class="gp g4 ln"></span>
    <span class="tb"><svg><use href="#c15"/></svg></span><span class="gp g1"></span><span class="tb"><svg><use href="#c16"/></svg></span><span class="gp g1"></span><span class="tb"><svg><use href="#c17"/></svg></span><span class="gp g2"></span><span class="tb"><svg><use href="#c18"/></svg></span><span class="tb"><svg><use href="#c19"/></svg></span><span class="ca"></span><span class="tb"><svg><use href="#c20"/></svg></span><span class="ca"></span>
    <span class="gp g10 ln"></span>
    <span class="tb"><svg><use href="#c21"/></svg></span>
    <span class="gp g8 ln"></span>
    <span class="tb"><svg><use href="#d1"/></svg></span><span class="tb"><svg><use href="#d2"/></svg></span><span class="tb"><svg><use href="#d3"/></svg></span><span class="tb"><svg><use href="#d4"/></svg></span><span class="tb"><svg><use href="#d5"/></svg></span><span class="tb"><svg><use href="#d6"/></svg></span>
    <span class="gp g6 ln"></span>
    <span class="tb"><svg><use href="#d7"/></svg></span><span class="tb"><svg><use href="#d8"/></svg></span><span class="tb"><svg><use href="#d9"/></svg></span><span class="tb"><svg><use href="#d10"/></svg></span><span class="tb"><svg><use href="#d11"/></svg></span><span class="tb"><svg><use href="#d12"/></svg></span>
    <span class="gp g8 ln"></span>
    <span class="tb"><svg><use href="#d13"/></svg></span><span class="ca"></span>
    <span class="gp g12 ln"></span>
    <div class="combo combo2"><span class="sw12"></span><span class="xyz">1 - XYZ global</span><svg class="chev ms-auto me-2" viewBox="0 0 10 6"><path d="M.5.5L5 5 9.500.5" fill="none" stroke="#555"/></svg></div>
    <span class="gp g1"></span><span class="tb"><svg><use href="#f6"/></svg></span>
    <span class="gp g6 ln"></span>
    <span class="tb"><svg><use href="#f1"/></svg></span><span class="tb"><svg><use href="#f2"/></svg></span><span class="tb on"><svg><use href="#f3"/></svg></span><span class="tb"><svg><use href="#f4"/></svg></span><span class="more">»</span>
    <span class="gp g10 ln"></span>
    <span class="tb"><svg><use href="#f5"/></svg></span><span class="ca"></span><span class="more ms-auto">»</span>
  </div>

  <div class="main d-flex">
    <!-- navigator -->
    <div class="navpane d-flex flex-column">
      <div class="dockhead d-flex align-items-center justify-content-between">Navegador - Datos
        <div class="d-flex gap-3 align-items-center pe-1"><svg width="10" height="10" viewBox="0 0 10 10"><path d="M3 3V1h6v5H7M1 3h6v6H1z" fill="none" stroke="#444"/></svg><svg width="9" height="9" viewBox="0 0 9 9"><path d="M1 1l7 7M8 1L1 8" stroke="#444" stroke-width="1.500"/></svg></div>
      </div>
      <div class="tree">
        <div class="trow ps-1"><span class="ic"><svg><use href="#rf"/></svg></span>RFEM</div>
        <div class="trow lv0"><span class="chv"><svg><use href="#cd"/></svg></span><span class="ic"><svg><use href="#tfile"/></svg></span><b>Analisis_de_busqueda_de_forma.rf6*</b></div>
        <div class="trow lv1"><span class="chv"><svg><use href="#cd"/></svg></span><span class="ic"><svg><use href="#fold"/></svg></span>Objetos básicos</div>
        <div class="trow lv2"><span class="chv"><svg><use href="#cr"/></svg></span><span class="ic"><svg><use href="#tmat"/></svg></span>Materiales</div>
        <div class="trow lv2"><span class="chv"><svg><use href="#cr"/></svg></span><span class="ic"><svg><use href="#tsec"/></svg></span>Secciones</div>
        <div class="trow lv2"><span class="chv"><svg><use href="#cr"/></svg></span><span class="ic"><svg><use href="#tthk"/></svg></span>Espesores</div>
        <div class="trow lv2"><span class="chv"><svg><use href="#cr"/></svg></span><span class="ic"><svg><use href="#tnod"/></svg></span>Nudos</div>
        <div class="trow lv2"><span class="chv"><svg><use href="#cr"/></svg></span><span class="ic"><svg><use href="#tlin"/></svg></span>Líneas</div>
        <div class="trow lv2"><span class="chv"><svg><use href="#cr"/></svg></span><span class="ic"><svg><use href="#tbar"/></svg></span>Barras</div>
        <div class="trow lv2"><span class="chv"><svg><use href="#cr"/></svg></span><span class="ic"><svg><use href="#tsur"/></svg></span>Superficies</div>
        <div class="trow lv2"><span class="nochv"></span><span class="ic"><svg><use href="#tabe"/></svg></span>Aberturas</div>
        <div class="trow lv2"><span class="nochv"></span><span class="ic"><svg><use href="#tsol"/></svg></span>Sólidos</div>
        <div class="trow lv2"><span class="nochv"></span><span class="ic"><svg><use href="#tlc"/></svg></span>Conjuntos de líneas</div>
        <div class="trow lv2"><span class="nochv"></span><span class="ic"><svg><use href="#tbc"/></svg></span>Conjuntos de barras</div>
        <div class="trow lv2"><span class="nochv"></span><span class="ic"><svg><use href="#tsc"/></svg></span>Conjuntos de superficies</div>
        <div class="trow lv2"><span class="nochv"></span><span class="ic"><svg><use href="#tsoc"/></svg></span>Conjuntos de sólidos</div>
        <div class="trow lv1"><span class="chv"><svg><use href="#cr"/></svg></span><span class="ic"><svg><use href="#fold"/></svg></span>Objetos especiales</div>
        <div class="trow lv1"><span class="chv"><svg><use href="#cr"/></svg></span><span class="ic"><svg><use href="#fold"/></svg></span>Tipos para nudos</div>
        <div class="trow lv1"><span class="chv"><svg><use href="#cr"/></svg></span><span class="ic"><svg><use href="#fold"/></svg></span>Tipos para líneas</div>
        <div class="trow lv1"><span class="chv"><svg><use href="#cr"/></svg></span><span class="ic"><svg><use href="#fold"/></svg></span>Tipos para barras</div>
        <div class="trow lv1"><span class="chv"><svg><use href="#cr"/></svg></span><span class="ic"><svg><use href="#fold"/></svg></span>Tipos para superficies</div>
        <div class="trow lv1"><span class="chv"><svg><use href="#cr"/></svg></span><span class="ic"><svg><use href="#fold"/></svg></span>Tipos para sólidos</div>
        <div class="trow lv1"><span class="chv"><svg><use href="#cr"/></svg></span><span class="ic"><svg><use href="#fold"/></svg></span>Tipos para objetos especiales</div>
        <div class="trow lv1"><span class="chv"><svg><use href="#cr"/></svg></span><span class="ic"><svg><use href="#fold"/></svg></span>Imperfecciones</div>
        <div class="trow lv1"><span class="chv"><svg><use href="#cd"/></svg></span><span class="ic"><svg><use href="#fold"/></svg></span>Casos de carga y combinaciones</div>
        <div class="trow lv2"><span class="chv"><svg><use href="#cd"/></svg></span><span class="ic"><svg><use href="#tload"/></svg></span>Casos de carga</div>
        <div class="trow lv3"><span class="sw"></span><span class="sw"></span><span class="gold">P</span><span class="lbl3">CC1 - Pretensado</span></div>
        <div class="trow lv2"><span class="chv"><svg><use href="#cr"/></svg></span><span class="ic"><svg><use href="#tact"/></svg></span>Acciones</div>
        <div class="trow lv2"><span class="chv"><svg><use href="#cr"/></svg></span><span class="ic"><svg><use href="#tact"/></svg></span>Situaciones de proyecto</div>
        <div class="trow lv2"><span class="nochv"></span><span class="ic"><svg><use href="#tact"/></svg></span>Combinaciones de acciones</div>
        <div class="trow lv2"><span class="nochv"></span><span class="ic"><svg><use href="#tact"/></svg></span>Combinaciones de carga</div>
        <div class="trow lv2"><span class="chv"><svg><use href="#cr"/></svg></span><span class="ic"><svg><use href="#tcfg"/></svg></span>Configuración del análisis estático</div>
        <div class="trow lv2"><span class="chv"><svg><use href="#cr"/></svg></span><span class="ic"><svg><use href="#tact"/></svg></span>Asistentes para combinaciones</div>
        <div class="trow lv1"><span class="chv"><svg><use href="#cr"/></svg></span><span class="ic"><svg><use href="#fold"/></svg></span>Asistentes para cargas</div>
        <div class="trow lv1"><span class="chv"><svg><use href="#cd"/></svg></span><span class="ic"><svg><use href="#fold"/></svg></span>Cargas</div>
        <div class="trow lv2"><span class="chv"><svg><use href="#cr"/></svg></span><span class="rowsel"><span class="ic"><svg><use href="#foldg"/></svg></span>CC1 - Pretensado</span></div>
        <div class="trow lv1"><span class="chv"><svg><use href="#cr"/></svg></span><span class="ic"><svg><use href="#fold"/></svg></span>Resultados</div>
        <div class="trow lv1"><span class="chv"><svg><use href="#cr"/></svg></span><span class="ic"><svg><use href="#fold"/></svg></span>Objetos auxiliares</div>
        <div class="trow lv1"><span class="chv"><svg><use href="#cd"/></svg></span><span class="ic"><svg><use href="#fold"/></svg></span>Informes</div>
        <div class="trow lv2"><span class="nochv"></span><span class="ic"><svg><use href="#tdoc"/></svg></span>1</div>
      </div>
      <div class="navtabs d-flex">
        <div class="navtab act d-flex align-items-center justify-content-center"><svg width="18" height="18" viewBox="0 0 18 18"><path d="M1 6h5l1 1h6v8H1z" fill="#f0c840" stroke="#a08020"/><rect x="6" y="1" width="11" height="7" fill="#fff" stroke="#3a6fb5"/><rect x="6" y="1" width="11" height="2.500" fill="#3a6fb5"/><path d="M9 10l6 2-2 2-1 4-3-8z" fill="#5a8fd0"/><path d="M14 13v5" stroke="#d22"/></svg></div>
        <div class="navtab d-flex align-items-center justify-content-center"><svg width="16" height="12" viewBox="0 0 16 12"><path d="M1 6c3-6 11-6 14 0-3 6-11 6-14 0z" fill="#fff" stroke="#345a9c"/><circle cx="8" cy="6" r="3.500" fill="#345a9c"/></svg></div>
        <div class="navtab d-flex align-items-center justify-content-center"><svg width="15" height="11" viewBox="0 0 15 11"><rect y="1" width="10" height="9" rx="1" fill="#555"/><path d="M10 4l5-3v9l-5-3z" fill="#555"/></svg></div>
      </div>
    </div>

    <!-- right -->
    <div class="rightpane d-flex flex-column">
      <div class="viewport">
        <svg class="canvas" viewBox="297 107 1143 689">
          <rect x="297" y="107" width="1143" height="689" fill="url(#dots)"/>
          <g fill="none" stroke="#dcdcdc" stroke-width="1"><path d="M298 135L373 106M519 106L1040 244M1347 147L1440 190M329 700L364 713"/></g>
          <g fill="none" stroke="#1fc4c4" stroke-width="1.200"><path d="M298 265L364 285M298 398L364 372M704 240L1050 106M1370 540L1440 560"/></g>
          <g>
            <path d="M339 134L411 241H434z" fill="#a8a8ea" stroke="#888" stroke-width=".4"/>
            <path d="M339 134L411 241" stroke="#222" stroke-width="1.200"/>
            <path d="M706 125L584 241H646z" fill="#a8a8f0"/>
            <path d="M706 125L646 241" stroke="#222" stroke-width="1.200"/>
            <path d="M698 112L640 241" stroke="#a6b3d3" stroke-width="6" opacity=".6"/>
            <path d="M348 122L355 114 472 241H452z" fill="#dfe6ec" stroke="#b5c4d2"/>
            <path d="M348 122L430 241" stroke="#b5c4d2" stroke-width="4" opacity=".8"/>
            <path d="M696 108L699 120 567 241H553z" fill="#dfe6ec" stroke="#b5c4d2"/>
            <path d="M365 135l7-6M372 150l7-6M390 175l7-7M410 200l7-7M432 224l7-7M680 119l6 7M650 150l6 7M620 176l6 7M590 205l6 7M568 226l6 7" stroke="#b5c4d2"/>
            <circle cx="433" cy="205" r="1.800" fill="#93a7bf"/><circle cx="592" cy="200" r="1.800" fill="#93a7bf"/>
            <text x="441" y="199" font-size="9" fill="#a8c4e8" text-anchor="middle" font-family="DejaVu Sans">S</text>
            <text x="589" y="194" font-size="9" fill="#a8c4e8" text-anchor="middle" font-family="DejaVu Sans">S</text>
            <path d="M339 134c-2 6-5 9-8 11 5 1 11 1 16 0-3-2-6-5-8-11z" fill="#2ab52a"/><circle cx="339" cy="134" r="2.200" fill="#f00"/>
            <path d="M708 122c-2 6-5 9-8 11 5 1 11 1 16 0-3-2-6-5-8-11z" fill="#2ab52a"/><circle cx="708" cy="122" r="2.200" fill="#f00"/>
          </g>
          <!-- axes -->
          <g fill="none" stroke-width="2.500">
            <path d="M357 732L334 741" stroke="#e01818" marker-end="url(#ahrv)"/>
            <path d="M357 732L330 725" stroke="#1fb41f" marker-end="url(#ahgv)"/>
            <path d="M357 732V764" stroke="#1018a0" marker-end="url(#ahbv)"/>
          </g>
          <circle cx="357" cy="732" r="3.500" fill="#e8e820"/>
          <g font-family="DejaVu Sans" font-size="10"><text x="315" y="725" fill="#1fc41f">Y</text><text x="321" y="748" fill="#e01818">X</text><text x="353" y="783" fill="#1830e0">Z</text></g>
          <!-- cube -->
          <g transform="translate(1300 100) scale(.3333)">
            <path d="M70 130L200 82 358 125 228 172z" fill="#a8a8a8"/>
            <path d="M70 130L228 172V368L70 322z" fill="#d2d2d2"/>
            <path d="M228 172L358 125V320L228 368z" fill="#d8d8d8"/>
            <g fill="none" stroke="#222" stroke-width="5">
              <path d="M70 130L200 82 358 125 228 172zM70 130V322L228 368V172M358 125V320L228 368"/>
              <path d="M108 143V333M185 163V355M70 180L228 220 358 172M70 280L228 320 358 270M326 136V332"/>
              <path d="M108 118L260 160M172 95L326 136M110 145L238 98M185 165L320 115"/>
            </g>
            <text x="135" y="268" font-size="42" font-weight="700" fill="#e8a0a0" font-family="DejaVu Sans">-X</text>
            <text x="272" y="262" font-size="36" font-weight="700" fill="#a0e0a0" font-family="DejaVu Sans" transform="rotate(-18 272 262)">+Y</text>
            <text x="190" y="138" font-size="30" font-weight="700" fill="#aab" font-family="DejaVu Sans">Z</text>
          </g>
        </svg>
        <div class="vplabel">CC1 - Pretensado</div>
      </div>
      <div class="paneltop d-flex align-items-center">Cargas superficiales
        <div class="ms-auto d-flex gap-3 align-items-center pe-2"><svg width="10" height="10" viewBox="0 0 10 10"><path d="M3 3V1h6v5H7M1 3h6v6H1z" fill="none" stroke="#444"/></svg><svg width="9" height="9" viewBox="0 0 9 9"><path d="M1 1l7 7M8 1L1 8" stroke="#444" stroke-width="1.500"/></svg></div>
      </div>
      <div class="pmenu d-flex align-items-center"><span>Ir a</span><span>Edición</span><span>Selección</span><span>Vista</span><span>Ajustes</span></div>
      <div class="ptool d-flex align-items-center">
        <div class="ptoolsel d-flex align-items-center"><svg width="16" height="16" viewBox="0 0 16 16"><rect x=".5" y="1.500" width="15" height="13" fill="#cfd9e8" stroke="#4a5f80"/><rect x="1" y="2" width="14" height="3" fill="#35629f"/><path d="M5.500 5v9M10.500 5v9M1 8h14M1 11h14" stroke="#4a5f80"/></svg><span>Cargas</span></div>
        <div class="ms-auto d-flex align-items-center ptright">
          <span class="tb"><svg viewBox="0 0 22 22"><rect x="2" y="3" width="18" height="16" fill="#fff" stroke="#555"/><rect x="2" y="3" width="18" height="3.400" fill="#35629f"/><path d="M2 9h18M2 12h18M2 15h18M8 6v13M14 6v13" stroke="#777"/><path d="M11 2c3-2 8-1 9 2-3 2-7 1-9-2z" fill="#b38a66"/></svg></span>
          <span class="tb"><svg viewBox="0 0 22 22"><rect x="1" y="1" width="20" height="7" fill="#9fd08a" stroke="#6fa05a"/><text x="1" y="18" font-size="9.500" fill="#222" font-family="DejaVu Sans">0,00</text><path d="M1 20h20" stroke="#2a5fa8"/></svg></span>
        </div>
      </div>
      <div class="gridwrap">
        <table class="grid">
          <colgroup><col><col><col><col><col><col><col><col><col><col><col></colgroup>
          <tr><th>Núm.</th><th></th><th></th><th></th><th></th><th></th><th></th><th></th><th></th><th></th><th></th></tr>
          <tr class="rsel"><td class="rn">1</td><td></td><td></td><td></td><td></td><td></td><td></td><td></td><td></td><td></td><td></td></tr>
          <tr><td class="rn">2</td><td></td><td></td><td></td><td></td><td></td><td></td><td></td><td></td><td></td><td></td></tr>
          <tr><td class="rn">3</td><td></td><td></td><td></td><td></td><td></td><td></td><td></td><td></td><td></td><td></td></tr>
          <tr><td class="rn">4</td><td></td><td></td><td></td><td></td><td></td><td></td><td></td><td></td><td></td><td></td></tr>
          <tr><td class="rn">5</td><td></td><td></td><td></td><td></td><td></td><td></td><td></td><td></td><td></td><td></td></tr>
          <tr><td class="rn">6</td><td></td><td></td><td></td><td></td><td></td><td></td><td></td><td></td><td></td><td></td></tr>
          <tr><td class="rn">7</td><td></td><td></td><td></td><td></td><td></td><td></td><td></td><td></td><td></td><td></td></tr>
        </table>
        <div class="vs d-flex flex-column align-items-center justify-content-end pb-1"><svg width="10" height="6" viewBox="0 0 10 6"><path d="M1 1l4 4 4-4" fill="none" stroke="#555" stroke-width="1.300"/></svg></div>
      </div>
      <div class="hs d-flex align-items-center">
        <svg width="6" height="10" viewBox="0 0 6 10" class="ms-1 fx0"><path d="M5 1L1 5l4 4" fill="none" stroke="#555" stroke-width="1.300"/></svg>
        <div class="hsthumb"></div>
        <svg width="6" height="10" viewBox="0 0 6 10" class="ms-auto me-4 fx0"><path d="M1 1l4 4-4 4" fill="none" stroke="#555" stroke-width="1.300"/></svg>
      </div>
      <div class="tabstrip d-flex">
        <div class="pager d-flex align-items-center">
          <svg width="8" height="9" viewBox="0 0 8 9" class="fx0"><path d="M1 0v9M8 0L3 4.500 8 9z" fill="#555" stroke="#555" stroke-width=".5"/></svg>
          <svg width="6" height="9" viewBox="0 0 6 9" class="ml11 fx0"><path d="M6 0L1 4.500 6 9z" fill="#555"/></svg>
          <span class="ml15">4 de 17</span>
          <svg width="6" height="9" viewBox="0 0 6 9" class="ml17 fx0"><path d="M0 0l5 4.500L0 9z" fill="#555"/></svg>
          <svg width="8" height="9" viewBox="0 0 8 9" class="ml10 fx0"><path d="M7 0v9M0 0l5 4.500L0 9z" fill="#555" stroke="#555" stroke-width=".5"/></svg>
        </div>
        <div class="mtab">Cargas en nudos</div><div class="mtab">Cargas lineales</div><div class="mtab">Cargas en barras</div><div class="mtab act">Cargas superficiales</div><div class="mtab">Cargas en aberturas</div><div class="mtab">Cargas en sólidos</div><div class="mtab">Cargas en conjuntos de líneas</div><div class="mtab mtabend">Cargas en conjuntos de barras</div>
        <div class="d-flex align-items-center tabarrows"><span class="tri-l d-block"></span><span class="tri-r d-block"></span></div>
      </div>
    </div>
  </div>

  <div class="statusbar d-flex">
    <span class="stgap"></span>
    <div class="stbtn">FORZC</div><div class="stbtn">REJILLA</div><div class="stbtn">REJLIN</div><div class="stbtn">REFENT</div>
    <div class="stcell sb1"></div>
    <div class="stcell sb2"></div>
    <div class="stcell sb3">SC: XYZ global</div>
    <div class="stcell sb4">Plano: XY</div>
    <div class="stcell sb5"></div><div class="stcell sb5"></div><div class="stcell sb5"></div><div class="stcell"></div>
  </div>

  <!-- dialog -->
  <div class="dlg d-flex flex-column">
    <div class="dlghead d-flex align-items-center">
      <svg width="18" height="18" viewBox="0 0 18 18"><path d="M2 8l8-6 6 4-3 8-7 2z" fill="#8e99ad" stroke="#445" stroke-width=".6"/><path d="M5 7l7-3M7 10l7-3M7 4l3 9" stroke="#ddd"/><circle cx="4.500" cy="13.500" r="3.500" fill="#f0c020"/></svg>
      <span class="dlgtitle">Nueva carga superficial</span>
      <div class="ms-auto d-flex">
        <div class="winbtn d-flex align-items-center justify-content-center"><svg width="10" height="10" viewBox="0 0 12 12"><path d="M0 6h11" stroke="#6aa9e0"/></svg></div>
        <div class="winbtn d-flex align-items-center justify-content-center"><svg width="11" height="11" viewBox="0 0 11 11"><rect x=".5" y=".5" width="10" height="10" fill="none" stroke="#fff"/></svg></div>
        <div class="winbtn d-flex align-items-center justify-content-center"><svg width="11" height="11" viewBox="0 0 11 11"><path d="M.5.5l10 10M10.500.5l-10 10" stroke="#fff"/></svg></div>
      </div>
    </div>
    <div class="dlgbody">
      <div class="d-flex topcards">
        <div class="card boxw tc1 pad5"><div class="hd">Núm.</div><div class="inp">1</div></div>
        <div class="card boxw tc2 pad5"><div class="hd">Caso de carga</div>
          <div class="sel inp p-0 px-1"><span class="d-flex align-items-center swgap"><span class="sw"></span><span class="sw"></span><span class="gold">P</span><span class="cclbl">CC1 - Pretensado</span></span><svg class="chev" viewBox="0 0 10 6"><path d="M.5.5L5 5 9.500.5" fill="none" stroke="#555"/></svg></div></div>
        <div class="card boxw tc3 pad5"><div class="hd">Asignada a las superficies núm.</div>
          <div class="d-flex"><div class="inp inpb flex-grow-1 me-1">1,2</div><div class="fbtn fbtn25 mt-1"><svg viewBox="0 0 20 20"><path d="M6 3l8 8M14 3l-8 8" stroke="#d82020" stroke-width="1.500"/><use href="#cur" x="8" y="7" width="9" height="13"/></svg></div></div></div>
      </div>
      <div class="nav nav-tabs dtabs"><div class="dtab">Datos principales</div></div>
      <div class="dpanel d-flex">
        <div class="leftblk d-flex flex-column">
          <div class="uprow d-flex">
            <div class="col1 d-flex flex-column">
              <div class="card boxw cat ph">
                <div class="hd2">Categorías</div>
                <div class="lb m12">Tipo de carga</div>
                <div class="sel sel20 w179 m4"><span class="d-flex align-items-center gap-1"><span class="sw s-bf"></span><span class="bfl">Búsqueda de forma</span></span><svg class="chev" viewBox="0 0 10 6"><path d="M.5.5L5 5 9.500.5" fill="none" stroke="#555"/></svg></div>
                <div class="d-flex align-items-end">
                  <div class="list-group dd">
                    <div class="list-group-item"><span class="sw"></span>Fuerza</div>
                    <div class="list-group-item"><span class="sw s-t"></span>Temperatura</div>
                    <div class="list-group-item"><span class="sw s-d"></span>Deformación axial</div>
                    <div class="list-group-item"><span class="sw s-c"></span>Contraflecha</div>
                    <div class="list-group-item"><span class="sw s-m"></span>Movimiento giratorio</div>
                    <div class="list-group-item active"><span class="sw s-bf"></span>Búsqueda de forma</div>
                    <div class="list-group-item"><span class="sw s-ma"></span>Masa</div>
                  </div>
                  <div class="sbtn ml5"><svg viewBox="0 0 20 18"><path d="M6 1l1 3 3-1-2 3 2 2-3 0-1 3-1-3-3 0 2-2-2-3 3 1z" fill="#ddd" stroke="#aaa" stroke-width=".5"/><rect x="7" y="7" width="11" height="10" fill="#eee" stroke="#888"/><rect x="7" y="7" width="11" height="2.500" fill="#aaa"/></svg></div>
                  <div class="sbtn ml3"><svg viewBox="0 0 20 18"><path d="M8 5c2-4 9-4 11-1-3 3-8 4-11 1z" fill="#bbb"/><rect x="3" y="7" width="11" height="10" fill="#eee" stroke="#888"/><rect x="3" y="7" width="11" height="2.500" fill="#aaa"/></svg></div>
                </div>
                <div class="lb m17 disabledlb">Dirección de carga</div>
                <div class="inpd"></div>
              </div>
              <div class="card boxw emp"></div>
            </div>
            <div class="card boxw col2 ph">
              <div class="hd2">Parámetros</div>
              <div class="lb m12">Método de cálculo</div>
              <div class="sel w200 m4"><span class="selt">Estándar</span><svg class="chev" viewBox="0 0 10 6"><path d="M.5.5L5 5 9.500.5" fill="none" stroke="#555"/></svg></div>
              <div class="lb m17">Defin. búsqu. de forma</div>
              <div class="sel w200 m4"><span class="selt">Fuerza</span><svg class="chev" viewBox="0 0 10 6"><path d="M.5.5L5 5 9.500.5" fill="none" stroke="#555"/></svg></div>
              <div class="lb m17">Fuerza a lo largo del eje X</div>
              <div class="d-flex align-items-center m4"><span class="nlab">n<sub>x</sub></span><div class="spin">1.000<svg class="spinctl" viewBox="0 0 26 20"><path d="M4 8l3-3 3 3zM4 12l3 3 3-3z" fill="#666"/><path d="M18 6l4 4-4 4z" fill="#333"/></svg></div><span class="unit">[kN/m]</span></div>
              <div class="lb m17">Fuerza a lo largo del eje Y</div>
              <div class="d-flex align-items-center m4"><span class="nlab">n<sub>y</sub></span><div class="spin">1.000<svg class="spinctl" viewBox="0 0 26 20"><path d="M4 8l3-3 3 3zM4 12l3 3 3-3z" fill="#666"/><path d="M18 6l4 4-4 4z" fill="#333"/></svg></div><span class="unit">[kN/m]</span></div>
            </div>
          </div>
          <div class="lowrow d-flex">
            <div class="card boxw cm1 pad5"><div class="hd">Comentario</div>
              <div class="d-flex"><div class="sel m4 flex-grow-1">&nbsp;<svg class="chev" viewBox="0 0 10 6"><path d="M.5.5L5 5 9.500.5" fill="none" stroke="#555"/></svg></div><div class="cmtbtn ms-2"><svg viewBox="0 0 18 14"><rect x="1" y="1" width="11" height="8" fill="#ddd" stroke="#999"/><rect x="5" y="4" width="12" height="9" fill="#eee" stroke="#999"/><rect x="5" y="4" width="12" height="2" fill="#aaa"/></svg></div></div></div>
            <div class="card boxw cm2"></div>
          </div>
        </div>
        <div class="card boxw rgt">
          <div class="rtext">Tipo de carga 'Búsqueda de forma'<br>Distribución de carga 'Uniforme'</div>
          <svg width="336" height="220" viewBox="15 105 1008 660" class="illus">
            <path d="M160 195Q420 250 670 190Q700 215 872 148Q720 400 558 712Q400 360 160 195z" fill="url(#surf)"/>
            <path d="M160 195Q420 250 670 190Q700 215 872 148Q720 400 558 712Q400 360 160 195z" fill="url(#shine)"/>
            <g clip-path="url(#surfclip)" fill="none" stroke="#56617c" stroke-width="1.200" opacity=".65">
              <path d="M215 232Q500 270 715 205M270 270Q540 300 760 225M320 325Q560 345 800 215M375 395Q600 370 830 195M430 470Q620 420 850 165M480 550Q660 440 860 155"/>
              <path d="M230 205Q400 340 520 480M290 215Q450 340 580 510M380 220Q530 350 640 500M470 225Q590 330 680 400M560 215Q660 300 730 340M640 200Q720 260 780 280M720 200Q770 240 820 230M400 520L640 280M440 600L700 320M520 660L760 310"/>
            </g>
            <path d="M570 338L655 398 535 525 450 463z" fill="#bfbfc6" stroke="#5c5c68" stroke-width="4"/>
            <g fill="none" stroke="#1a9ce0" stroke-width="3.500">
              <path d="M403 432L525 303M605 302L690 362M700 432L580 559M500 560L415 498"/>
              <path d="M450 463L403 432" marker-end="url(#ah)"/><path d="M490 422L443 391" marker-end="url(#ah)"/><path d="M529 380L482 349" marker-end="url(#ah)"/><path d="M570 338L525 303" marker-end="url(#ah)"/>
              <path d="M570 338L605 302" marker-end="url(#ah)"/><path d="M612 368L647 332" marker-end="url(#ah)"/><path d="M655 398L690 362" marker-end="url(#ah)"/>
              <path d="M655 398L700 432" marker-end="url(#ah)"/><path d="M615 440L660 474" marker-end="url(#ah)"/><path d="M576 482L621 516" marker-end="url(#ah)"/><path d="M535 525L580 559" marker-end="url(#ah)"/>
              <path d="M535 525L500 560" marker-end="url(#ah)"/><path d="M492 494L457 529" marker-end="url(#ah)"/><path d="M450 463L415 498" marker-end="url(#ah)"/>
            </g>
            <g stroke-width="5" fill="none">
              <path d="M552 431L605 376" stroke="#d0400f" marker-end="url(#ahr)"/>
              <path d="M552 431L605 462" stroke="#10a040" marker-end="url(#ahg)"/>
              <path d="M552 431L572 492" stroke="#1030c0" marker-end="url(#ahb)"/>
            </g>
            <circle cx="552" cy="431" r="8" fill="#ffd800"/>
            <g font-family="DejaVu Sans" font-size="30">
              <text x="560" y="378" fill="#d0400f">x</text><text x="598" y="435" fill="#10a040">y</text><text x="527" y="512" fill="#1030c0">z</text>
            </g>
            <g font-family="DejaVu Sans" font-size="36" fill="#1a9ce0">
              <text x="666" y="318">n<tspan font-size="26" dy="6">x</tspan></text>
              <text x="382" y="350">n<tspan font-size="26" dy="6">y</tspan></text>
              <text x="385" y="556">n<tspan font-size="26" dy="6">x</tspan></text>
              <text x="668" y="535">n<tspan font-size="26" dy="6">y</tspan></text>
            </g>
          </svg>
          <div class="rline"></div>
          <div class="fbtn mt-auto ms-1 mb-1"><svg viewBox="0 0 20 20"><rect x="2" y="2" width="12" height="11" fill="#7fa7d6" stroke="#345"/><path d="M8 13l8-3 3 6-9 2z" fill="#3f8f55"/><circle cx="6" cy="6" r="1.800" fill="#eec"/></svg></div>
        </div>
      </div>
    </div>
    <div class="dlgfoot d-flex align-items-center">
      <div class="d-flex fbtns">
        <div class="fbtn"><svg viewBox="0 0 22 22"><rect x="1" y="1" width="20" height="6" fill="#9fd08a" stroke="#6fa05a"/><text x="1" y="17" font-size="9.500" fill="#222" font-family="DejaVu Sans">0,00</text><path d="M1 19h20" stroke="#2a5fa8"/></svg></div>
        <div class="fbtn"><svg viewBox="0 0 22 22"><rect x="2" y="1" width="4" height="4" fill="#d22"/><rect x="6" y="1" width="4" height="4" fill="#2a2"/><rect x="2" y="5" width="4" height="4" fill="#ec2"/><rect x="6" y="5" width="4" height="4" fill="#38d"/><text x="3" y="18" font-size="10" font-weight="700" fill="#222" font-family="DejaVu Sans">A</text><rect x="11" y="7" width="9" height="8" fill="#fff" stroke="#345"/><rect x="11" y="7" width="9" height="2.500" fill="#3a6fb5"/></svg></div>
        <div class="fbtn"><svg viewBox="0 0 22 22"><rect x="3" y="1" width="16" height="14" fill="#d8dee8" stroke="#567"/><path d="M6 8l5-5 5 5-3 2-2 3-2-3z" fill="#4a7fb0"/><path d="M11 15v4M6 20h10" stroke="#567" stroke-width="1.500"/></svg></div>
        <div class="fbtn"><svg viewBox="0 0 22 22"><path d="M7 1l7 7M14 1L7 8" stroke="#d82020" stroke-width="1.800"/><rect x="5" y="10" width="8" height="11" fill="#fff" stroke="#444"/><path d="M6.500 13h5M6.500 15h5M6.500 17h5" stroke="#444"/><use href="#cur" x="11" y="8" width="9" height="13"/></svg></div>
        <div class="fbtn"><svg viewBox="0 0 22 22"><text x="3" y="20" font-size="15" font-style="italic" font-family="Liberation Serif" fill="#222">fx</text><circle cx="15" cy="6" r="4.500" fill="#35629f"/><circle cx="15" cy="6" r="2" fill="#fff"/></svg></div>
      </div>
      <div class="ms-auto d-flex btnrow">
        <button type="button" class="btn okb prim">Aceptar</button>
        <button type="button" class="btn okb">Cancelar</button>
        <button type="button" class="btn okb">Aplicar</button>
      </div>
      <svg class="rgrip" viewBox="0 0 8 8"><g fill="#aaa"><rect x="6" y="6" width="2" height="2"/><rect x="3" y="6" width="2" height="2"/><rect x="0" y="6" width="2" height="2"/><rect x="6" y="3" width="2" height="2"/><rect x="3" y="3" width="2" height="2"/><rect x="6" y="0" width="2" height="2"/></g></svg>
    </div>
  </div>

  <div class="hilite h1"></div>
  <svg class="harrow" viewBox="0 0 22 38"><path d="M11 2l8 12h-5.500v20h-5V14H3z" fill="#22d422"/></svg>
  <div class="hilite h2"></div>
</div>
</body>
</html>
